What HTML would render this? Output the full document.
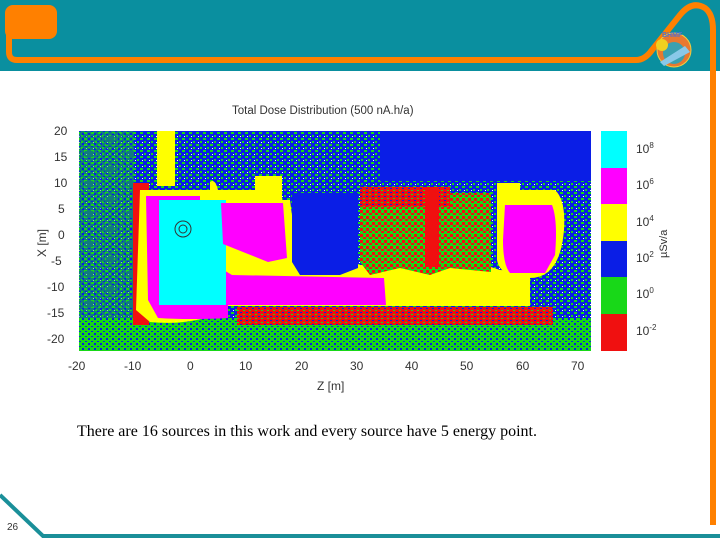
<!DOCTYPE html>
<html><head><meta charset="utf-8"><style>
html,body{margin:0;padding:0;background:#fff;}
body{width:720px;height:540px;position:relative;overflow:hidden;font-family:"Liberation Sans",sans-serif;}
.t{position:absolute;white-space:nowrap;}
</style></head><body>
<svg width="720" height="540" style="position:absolute;left:0;top:0">
<defs>
<pattern id="sp" width="7" height="6" patternUnits="userSpaceOnUse">
<rect width="7" height="6" fill="#0a1ee6"/>
<rect x="0" y="0" width="3" height="2" fill="#18d818"/>
<rect x="4" y="3" width="2" height="2" fill="#18d818"/>
<rect x="2" y="4" width="1" height="1" fill="#fff"/>
</pattern>
<pattern id="sp2" width="6" height="5" patternUnits="userSpaceOnUse">
<rect width="6" height="5" fill="#18d818"/>
<rect x="1" y="1" width="2" height="1" fill="#0a1ee6"/>
<rect x="4" y="3" width="2" height="2" fill="#0a1ee6"/>
</pattern>
<pattern id="rg" width="6" height="6" patternUnits="userSpaceOnUse">
<rect width="6" height="6" fill="#18d818"/>
<rect x="0" y="0" width="3" height="3" fill="#f01010"/>
<rect x="3" y="3" width="3" height="2" fill="#f01010"/>
</pattern>
<pattern id="rb" width="6" height="4" patternUnits="userSpaceOnUse">
<rect width="6" height="4" fill="#f01010"/>
<rect x="0" y="0" width="2" height="1" fill="#0a1ee6"/>
<rect x="3" y="2" width="2" height="1" fill="#18d818"/>
</pattern>
</defs>
<rect x="0" y="0" width="720" height="71" fill="#0a8f9f"/>
<rect x="5" y="5" width="52" height="34" rx="8" fill="#ff8000"/>
<path d="M9 30 V52 Q9 60 17 60 H636 Q645 60 652 50 L680 15 Q692 0 705 8 Q713 14 713 30 V525" fill="none" stroke="#ff8000" stroke-width="6"/>
<circle cx="674" cy="50" r="17" fill="#e87830" stroke="#f0d040" stroke-width="1"/>
<circle cx="674" cy="53" r="11" fill="#3aa0b0"/>
<circle cx="662" cy="45" r="6" fill="#f0d020"/>
<path d="M660 62 L685 46 L690 52 L664 66Z" fill="#8ac8e8"/>
<text x="662" y="37" font-size="7" fill="#5070d0" font-weight="bold">BHMF</text>
<path d="M0 495 L43 536 H720" fill="none" stroke="#1a8f99" stroke-width="4"/>
<rect x="79" y="131" width="512" height="220" fill="url(#sp)"/>
<rect x="380" y="131" width="211" height="50" fill="#0a1ee6"/>
<rect x="79" y="318" width="512" height="33" fill="url(#sp2)"/>
<rect x="79" y="131" width="55" height="190" fill="url(#sp2)" opacity="0.5"/>
<rect x="133" y="183" width="16" height="142" fill="#f01010"/>
<rect x="237" y="307" width="316" height="18" fill="url(#rb)"/>
<rect x="157" y="131" width="18" height="55" fill="#ffff00"/>
<path d="M140 190 H210 V182 Q215 178 218 190 H255 V176 H282 V200 H290 L298 262 H352 L360 265 H485 L500 270 L530 272 V306 H210 L205 318 Q180 325 150 322 L136 310 Z" fill="#ffff00"/>
<path d="M146 196 H200 V205 L215 205 V265 L232 275 L384 278 L386 305 H228 V318 Q190 320 158 318 L148 300Z" fill="#ff00ff"/>
<rect x="159" y="200" width="67" height="105" fill="#00ffff"/>
<path d="M221 203 H283 L287 258 L268 262 L223 244Z" fill="#ff00ff"/>
<path d="M292 193 H358 V268 L340 275 H300 L292 262Z" fill="#0a1ee6"/>
<path d="M360 193 H491 V272 L450 268 L430 275 L400 268 L370 275 L360 262Z" fill="url(#rg)"/>
<rect x="360" y="187" width="90" height="20" fill="url(#rb)"/>
<rect x="425" y="187" width="14" height="80" fill="#f01010"/>
<path d="M497 183 H520 V190 H555 Q566 200 564 230 Q560 278 530 278 Q500 278 497 260Z" fill="#ffff00"/>
<path d="M505 205 H552 Q558 220 555 255 L545 273 H510 Q503 265 503 240Z" fill="#ff00ff"/>
<circle cx="183" cy="229" r="8" fill="none" stroke="#333" stroke-width="1"/>
<circle cx="183" cy="229" r="4" fill="none" stroke="#333" stroke-width="1"/>
<rect x="601" y="131" width="26" height="37" fill="#00ffff"/>
<rect x="601" y="168" width="26" height="36" fill="#ff00ff"/>
<rect x="601" y="204" width="26" height="37" fill="#ffff00"/>
<rect x="601" y="241" width="26" height="36" fill="#0a1ee6"/>
<rect x="601" y="277" width="26" height="37" fill="#18d818"/>
<rect x="601" y="314" width="26" height="37" fill="#f01010"/>
<g font-family="Liberation Sans" font-size="12" fill="#333">
<text x="636" y="153">10<tspan font-size="8" dy="-5">8</tspan></text>
<text x="636" y="189">10<tspan font-size="8" dy="-5">6</tspan></text>
<text x="636" y="226">10<tspan font-size="8" dy="-5">4</tspan></text>
<text x="636" y="262">10<tspan font-size="8" dy="-5">2</tspan></text>
<text x="636" y="298">10<tspan font-size="8" dy="-5">0</tspan></text>
<text x="636" y="335">10<tspan font-size="8" dy="-5">-2</tspan></text>
<text transform="translate(667,258) rotate(-90)" font-size="11">µSv/a</text>
<text x="54" y="135">20</text><text x="54" y="161">15</text><text x="54" y="187">10</text>
<text x="58" y="213">5</text><text x="58" y="239">0</text><text x="51" y="265">-5</text>
<text x="47" y="291">-10</text><text x="47" y="317">-15</text><text x="47" y="343">-20</text>
<text x="68" y="370">-20</text><text x="124" y="370">-10</text><text x="187" y="370">0</text>
<text x="239" y="370">10</text><text x="295" y="370">20</text><text x="350" y="370">30</text>
<text x="405" y="370">40</text><text x="460" y="370">50</text><text x="516" y="370">60</text><text x="571" y="370">70</text>
<text x="317" y="390">Z [m]</text>
<text transform="translate(46,257) rotate(-90)">X [m]</text>
<text x="232" y="114" font-size="11.5">Total Dose Distribution (500 nA.h/a)</text>
</g>
</svg>
<div class="t" style="left:77px;top:423px;font-family:'Liberation Serif',serif;font-size:16px;color:#000">There are 16 sources in this work and every source have 5 energy point.</div>
<div class="t" style="left:7px;top:522px;font-size:10px;color:#333">26</div>
</body></html>
